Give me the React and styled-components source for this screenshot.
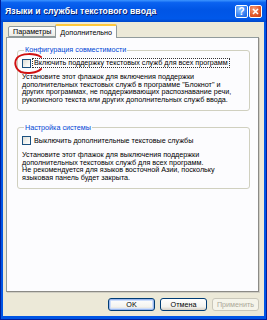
import React from 'react';
import styled, { createGlobalStyle } from 'styled-components';

const GlobalStyle = createGlobalStyle`
  html, body {
    margin: 0;
    padding: 0;
    background: #ffffff;
  }
  body {
    font-family: "Liberation Sans", Arial, sans-serif;
  }
`;

const Window = styled.div`
  width: 267px;
  height: 320px;
  box-sizing: border-box;
  display: flex;
  flex-direction: column;
  background: #0055e5;
  border-left: 1px solid #001e9a;
  border-right: 1px solid #001e9a;
  border-bottom: 1px solid #001e9a;
`;

const TitleBar = styled.div`
  height: 22px;
  flex: none;
  display: flex;
  align-items: center;
  justify-content: space-between;
  padding: 0 4px 0 4px;
  background: linear-gradient(
    to bottom,
    #3d95ff 0%,
    #0a62f0 12%,
    #0055e5 45%,
    #0058ea 85%,
    #0047c8 100%
  );
`;

const Title = styled.span`
  color: #ffffff;
  font-weight: bold;
  font-size: 8.6px;
  letter-spacing: 0.1px;
  text-shadow: 1px 1px 0 #0a1c6a;
`;

const Controls = styled.div`
  display: flex;
  gap: 1px;
`;

const CapButton = styled.div`
  width: 13px;
  height: 13px;
  box-sizing: border-box;
  border: 1px solid #ffffff;
  border-radius: 2px;
  display: flex;
  align-items: center;
  justify-content: center;
  color: #ffffff;
  font-weight: bold;
  font-size: 10px;
  background: ${(p) =>
    p.$close
      ? 'radial-gradient(circle at 35% 30%, #f4a17d 0%, #e35b2c 55%, #c23a12 100%)'
      : 'radial-gradient(circle at 35% 30%, #8ec0ff 0%, #3a86f5 55%, #1b5fd8 100%)'};
`;

const Body = styled.div`
  flex: 1;
  display: flex;
  flex-direction: column;
  background: #ece9d8;
  margin: 0 2px 3px 2px;
  padding: 2px 5px 0 3px;
`;

const Tabs = styled.div`
  display: flex;
  align-items: flex-end;
  height: 13px;
  padding-left: 2px;
`;

const Tab = styled.div`
  box-sizing: border-box;
  height: ${(p) => (p.$active ? '14px' : '11px')};
  margin-bottom: ${(p) => (p.$active ? '-1px' : '0')};
  padding: 0 4px;
  display: flex;
  align-items: center;
  font-size: 7.2px;
  color: #000000;
  background: ${(p) =>
    p.$active ? '#fcfcfe' : 'linear-gradient(to bottom, #ffffff, #ecebe5)'};
  border: 1px solid #919b9c;
  border-bottom: ${(p) => (p.$active ? 'none' : '1px solid #919b9c')};
  border-top: ${(p) => (p.$active ? '2px solid #ffc83c' : '1px solid #919b9c')};
  border-radius: 2px 2px 0 0;
  position: relative;
  z-index: ${(p) => (p.$active ? 2 : 1)};
  margin-left: ${(p) => (p.$active ? '-1px' : '0')};
`;

const Panel = styled.div`
  height: 255px;
  box-sizing: border-box;
  background: #fcfcfe;
  border: 1px solid #919b9c;
  border-right-color: #8b8a86;
  border-bottom-color: #8b8a86;
  box-shadow: 1px 1px 0 #d0cec3;
  padding: 8px 8px 0 10px;
  display: flex;
  flex-direction: column;
  gap: 13px;
  position: relative;
  z-index: 1;
`;

const Group = styled.fieldset`
  margin: 0;
  padding: 4px 5px 6px 4px;
  border: 1px solid #d0d0bf;
  border-radius: 3px;
`;

const Legend = styled.legend`
  padding: 0 1px;
  margin-left: 2px;
  font-size: 7.2px;
  color: #0046d5;
  line-height: 8px;
`;

const CheckRow = styled.div`
  display: flex;
  align-items: center;
  gap: 2px;
  height: 10px;
  position: relative;
`;

const Box = styled.span`
  width: 9px;
  height: 9px;
  box-sizing: border-box;
  border: 1px solid #1c5180;
  background: linear-gradient(135deg, #dcdcd7 0%, #f4f4f0 60%, #ffffff 100%);
  flex: none;
`;

const CheckLabel = styled.span`
  font-size: 7.2px;
  line-height: 8px;
  color: #000000;
  white-space: nowrap;
  outline: ${(p) => (p.$focus ? '1px dotted #333' : 'none')};
  padding: 0 1px;
`;

const Description = styled.p`
  margin: 5px 0 0 0;
  font-size: 7.2px;
  line-height: 7.7px;
  color: #000000;
  white-space: nowrap;
`;

const Annotation = styled.svg`
  position: absolute;
  left: -9px;
  top: -5px;
  pointer-events: none;
`;

const ButtonRow = styled.div`
  display: flex;
  justify-content: flex-end;
  gap: 5px;
  margin-top: 6px;
`;

const Button = styled.div`
  width: 47px;
  height: 13px;
  box-sizing: border-box;
  display: flex;
  align-items: center;
  justify-content: center;
  font-size: 7.2px;
  border-radius: 3px;
  color: ${(p) => (p.$disabled ? '#aca899' : '#000000')};
  border: 1px solid ${(p) => (p.$disabled ? '#c9c7ba' : '#003c74')};
  background: ${(p) =>
    p.$disabled
      ? '#f5f4ea'
      : 'linear-gradient(to bottom, #ffffff 0%, #f3f3ef 70%, #d6d0c5 100%)'};
  box-shadow: ${(p) =>
    p.$default ? 'inset 0 0 0 1px #9ab7ee, inset 0 0 0 2px #cedefa' : 'none'};
`;

export default function App() {
  return (
    <>
      <GlobalStyle />
      <Window>
        <TitleBar>
          <Title>Языки и службы текстового ввода</Title>
          <Controls>
            <CapButton>?</CapButton>
            <CapButton $close>
              <svg width="7" height="7" viewBox="0 0 7 7">
                <path d="M1 1L6 6M6 1L1 6" stroke="#ffffff" strokeWidth="1.6" />
              </svg>
            </CapButton>
          </Controls>
        </TitleBar>
        <Body>
          <Tabs>
            <Tab>Параметры</Tab>
            <Tab $active>Дополнительно</Tab>
          </Tabs>
          <Panel>
            <Group>
              <Legend>Конфигурация совместимости</Legend>
              <CheckRow>
                <Box />
                <CheckLabel $focus>
                  Включить поддержку текстовых служб для всех программ
                </CheckLabel>
                <Annotation width="34" height="22" viewBox="0 0 34 22">
                  <path
                    d="M28 4 C22 0, 8 0, 4 5 C1 9, 2 16, 8 19 C14 21, 24 20, 28 16"
                    fill="none"
                    stroke="#d01010"
                    strokeWidth="2"
                    strokeLinecap="round"
                  />
                </Annotation>
              </CheckRow>
              <Description>
                Установите этот флажок для включения поддержки<br />
                дополнительных текстовых служб в программе "Блокнот" и<br />
                других программах, не поддерживающих распознавание речи,<br />
                рукописного текста или других дополнительных служб ввода.
              </Description>
            </Group>
            <Group>
              <Legend>Настройка системы</Legend>
              <CheckRow>
                <Box />
                <CheckLabel>Выключить дополнительные текстовые службы</CheckLabel>
              </CheckRow>
              <Description>
                Установите этот флажок для выключения поддержки<br />
                дополнительных текстовых служб для всех программ.<br />
                Не рекомендуется для языков восточной Азии, поскольку<br />
                языковая панель будет закрыта.
              </Description>
            </Group>
          </Panel>
          <ButtonRow>
            <Button $default>OK</Button>
            <Button>Отмена</Button>
            <Button $disabled>Применить</Button>
          </ButtonRow>
        </Body>
      </Window>
    </>
  );
}
